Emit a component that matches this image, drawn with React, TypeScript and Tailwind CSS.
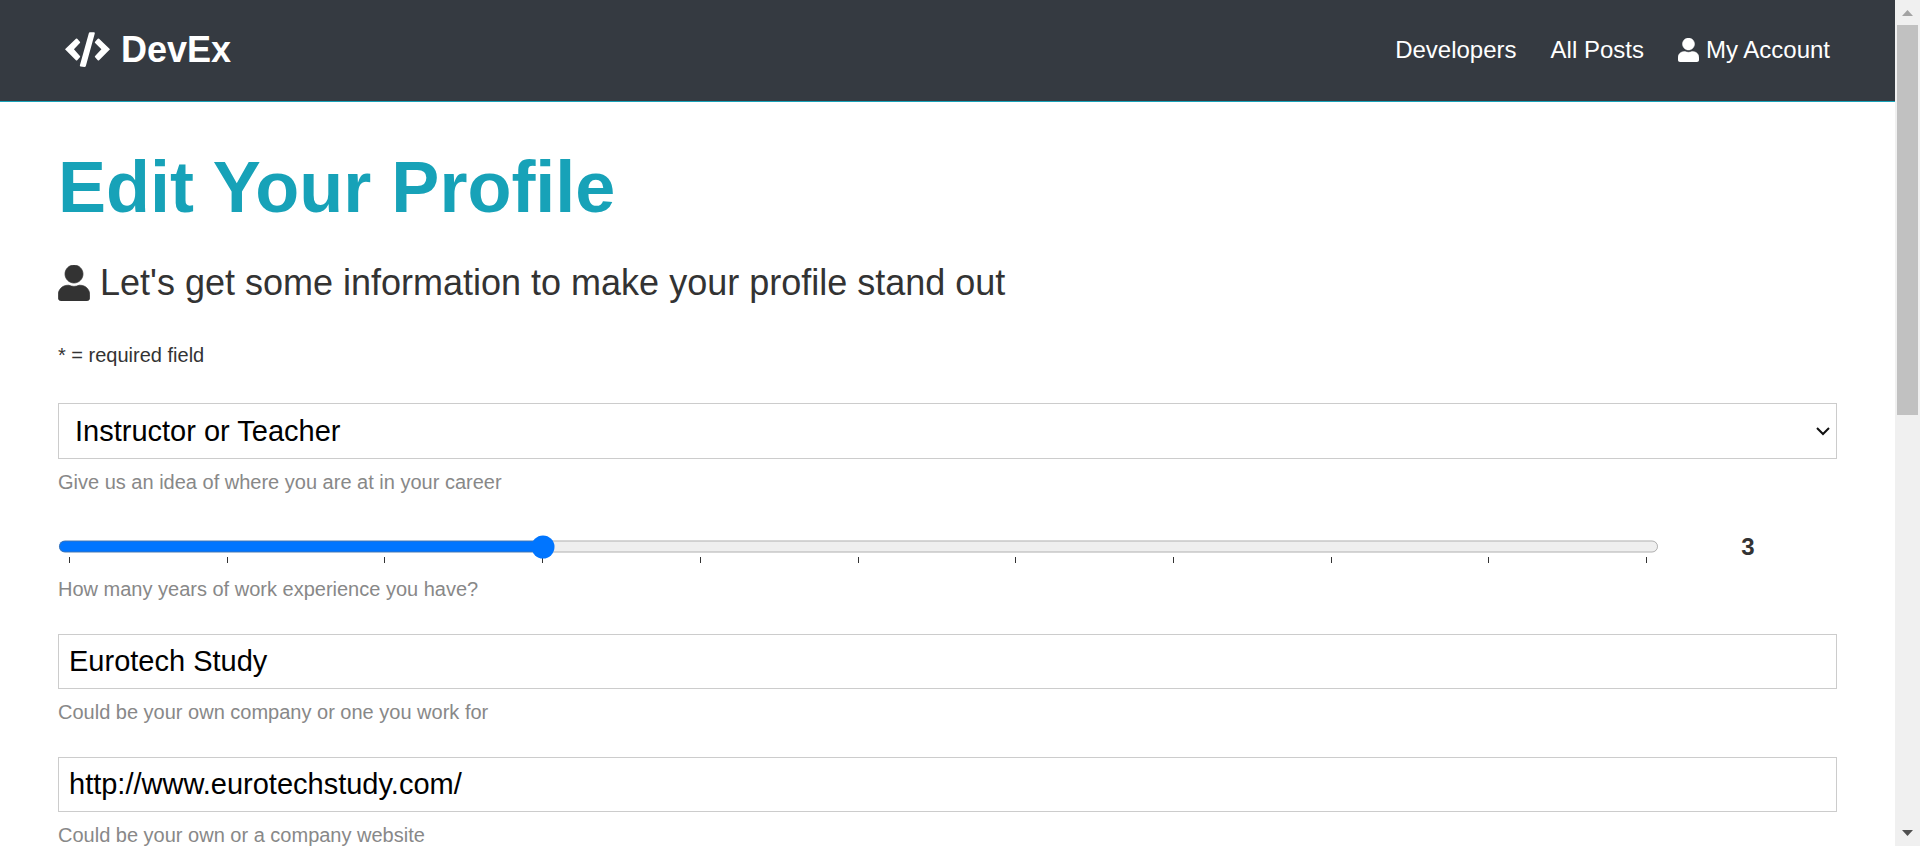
import { useState } from "react";
import type { ReactNode } from "react";
import { FaUser } from "react-icons/fa";

const years = Array.from({ length: 11 }, (_, i) => i);

function CodeIcon() {
  return (
    <svg viewBox="0 0 136 108" fill="currentColor" aria-hidden="true" className="h-9 w-[45px]">
      <path d="M0 52 L33 20 Q35 18 37 20 L45 29 Q47 31 45 33 L27 52 L45 72 Q47 74 45 76 L37 85 Q35 87 33 85 Z" />
      <path d="M136 52 L103 20 Q101 18 99 20 L91 29 Q89 31 91 33 L110 52 L91 72 Q89 74 91 76 L99 85 Q101 87 103 85 Z" />
      <path d="M75 0 L88 0 Q91 1 90 4 L63 102 Q62 105 59 105 L47 104 Q44 103 45 100 L72 3 Q73 0 75 0 Z" />
    </svg>
  );
}

function Navbar() {
  return (
    <nav className="flex items-center justify-between border-b border-[#17a2b8] bg-[#353a41] px-[65px] pt-[23px] pb-[25px] text-white">
      <h1 className="text-4xl leading-[53px] font-bold">
        <a href="#home" className="flex items-center gap-[11px]">
          <CodeIcon />
          DevEx
        </a>
      </h1>
      <ul className="flex items-center gap-[34px] text-2xl leading-9">
        <li>
          <a href="#developers">Developers</a>
        </li>
        <li>
          <a href="#posts">All Posts</a>
        </li>
        <li>
          <a href="#account" className="flex items-center gap-[7px]">
            <FaUser strokeWidth={10} className="h-6 w-[21px]" />
            My Account
          </a>
        </li>
      </ul>
    </nav>
  );
}

function Field({ id, hint, children }: { id: string; hint: string; children: ReactNode }) {
  return (
    <div className="flex flex-col gap-[7px]">
      {children}
      <label htmlFor={id} className="text-[20px] leading-8 text-[#888]">
        {hint}
      </label>
    </div>
  );
}

const box = "block w-full border border-[#ccc] bg-white text-[29px] leading-8 text-black";

function TextField({ id, hint, value }: { id: string; hint: string; value: string }) {
  return (
    <Field id={id} hint={hint}>
      <input id={id} type="text" defaultValue={value} className={box + " h-[55px] px-[10px]"} />
    </Field>
  );
}

function ScrollRail() {
  return (
    <div aria-hidden="true" className="flex w-[25px] shrink-0 flex-col items-center bg-[#f0f0f0]">
      <svg viewBox="0 0 25 25" className="h-[25px] w-[25px] shrink-0">
        <path d="M7 16 L12.500 10 L18 16 Z" fill="#a3a3a3" />
      </svg>
      <div className="flex w-full grow flex-col items-center">
        <div className="h-[49%] w-[21px] bg-[#c1c1c1]" />
      </div>
      <svg viewBox="0 0 25 25" className="h-[25px] w-[25px] shrink-0">
        <path d="M7 9 L12.500 15 L18 9 Z" fill="#505050" />
      </svg>
    </div>
  );
}

export default function App() {
  const [experience, setExperience] = useState(3);

  return (
    <div className="flex h-screen overflow-hidden bg-white font-['Liberation_Sans',Arial,sans-serif] text-[#333]">
      <div className="min-w-0 grow overflow-hidden">
        <Navbar />
        <main className="px-[58px] pt-[42px]">
          <h1 className="text-7xl leading-[86px] font-bold text-[#17a2b8]">Edit Your Profile</h1>
          <p className="mt-6 flex items-center gap-[10px] text-4xl leading-[58px]">
            <FaUser strokeWidth={10} className="h-9 w-8" />
            Let's get some information to make your profile stand out
          </p>
          <p className="mt-6 text-[20px] leading-[38px]">* = required field</p>
          <form className="mt-[29px] flex flex-col gap-[29px]">
            <Field id="status" hint="Give us an idea of where you are at in your career">
              <div className="relative">
                <select id="status" defaultValue="teacher" className={box + " h-14 appearance-none pr-10 pl-4"}>
                  <option value="teacher">Instructor or Teacher</option>
                  <option value="developer">Developer</option>
                  <option value="student">Student</option>
                </select>
                <svg
                  viewBox="0 0 14 9"
                  aria-hidden="true"
                  className="pointer-events-none absolute top-6 right-[7px] h-[9px] w-[14px]"
                >
                  <path d="M1 1 L7 7 L13 1" fill="none" stroke="#111" strokeWidth="2" />
                </svg>
              </div>
            </Field>
            <Field id="experience" hint="How many years of work experience you have?">
              <div className="flex items-center">
                <input
                  id="experience"
                  type="range"
                  min={0}
                  max={10}
                  list="years"
                  value={experience}
                  onChange={(e) => setExperience(Number(e.target.value))}
                  className="w-[90%] [zoom:1.5]"
                />
                <datalist id="years">
                  {years.map((y) => (
                    <option key={y} value={y} />
                  ))}
                </datalist>
                <output htmlFor="experience" className="grow text-center text-2xl leading-[39px] font-bold">
                  {experience}
                </output>
              </div>
            </Field>
            <TextField id="company" hint="Could be your own company or one you work for" value="Eurotech Study" />
            <TextField id="website" hint="Could be your own or a company website" value="http://www.eurotechstudy.com/" />
          </form>
        </main>
      </div>
      <ScrollRail />
    </div>
  );
}
